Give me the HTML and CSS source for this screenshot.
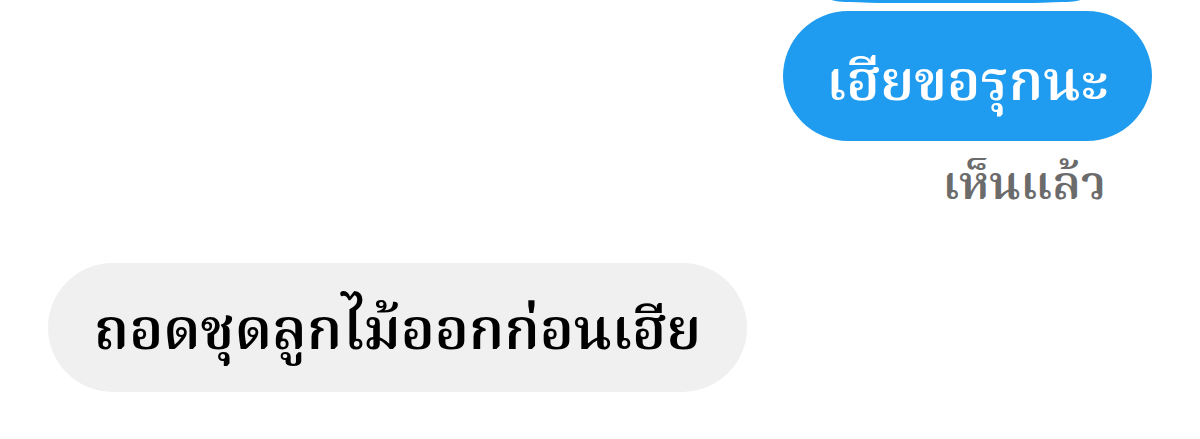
FILE: index.html
```html
<!DOCTYPE html>
<html lang="th">
<head>
<meta charset="utf-8">
<link rel="stylesheet" href="styles.css">
</head>
<body>
<div class="chat">
  <div class="prev-tail"></div>
  <div class="row out">
    <div class="bubble blue">เฮียขอรุกนะ</div>
  </div>
  <div class="seen">เห็นแล้ว</div>
  <div class="row in">
    <div class="bubble gray">ถอดชุดลูกไม้ออกก่อนเฮีย</div>
  </div>
</div>
</body>
</html>
```

FILE: styles.css
```css
html, body {
  margin: 0;
  padding: 0;
  background: #ffffff;
}
.chat {
  width: 1200px;
  height: 439px;
  overflow: hidden;
  display: flex;
  flex-direction: column;
  font-family: "Noto Serif Thai", "Noto Sans", sans-serif;
}
.prev-tail {
  align-self: flex-end;
  width: 248px;
  height: 3px;
  margin-right: 120px;
  background: #1f9bf0;
  border-radius: 0 0 60px 60px / 0 0 3px 3px;
}
.row {
  display: flex;
}
.row.out {
  justify-content: flex-end;
  padding-right: 48px;
  margin-top: 8px;
}
.row.in {
  justify-content: flex-start;
  padding-left: 48px;
  margin-top: 52px;
}
.bubble {
  display: flex;
  align-items: center;
  justify-content: center;
  box-sizing: border-box;
  font-weight: 600;
  line-height: 1;
  white-space: nowrap;
}
.blue {
  width: 369px;
  height: 130px;
  padding-top: 18px;
  border-radius: 65px;
  background: #1f9bf0;
  color: #ffffff;
  font-size: 56px;
}
.gray {
  width: 699px;
  height: 129px;
  padding-top: 12px;
  border-radius: 65px;
  background: #f0f0f0;
  color: #000000;
  font-size: 57px;
}
.seen {
  align-self: flex-end;
  margin-right: 94px;
  margin-top: 22px;
  font-size: 47px;
  font-weight: 600;
  line-height: 48px;
  color: #6b6b6b;
}
```
